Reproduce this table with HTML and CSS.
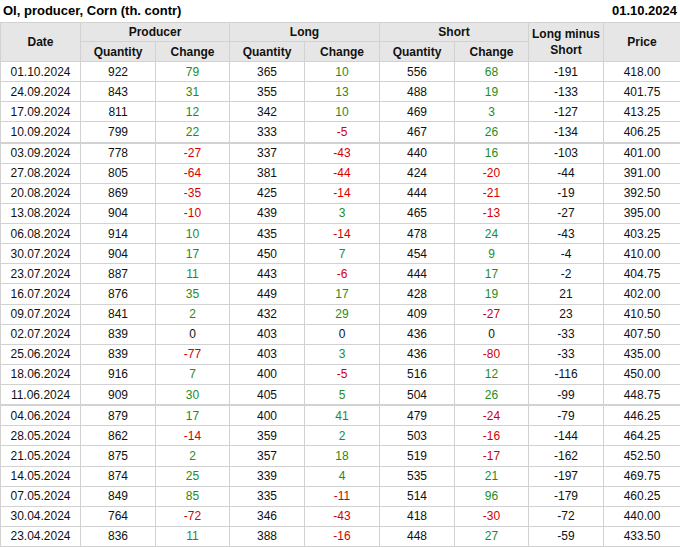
FILE: index.html
```html
<!DOCTYPE html>
<html>
<head>
<meta charset="utf-8">
<link rel="stylesheet" href="styles.css">
</head>
<body>
<div class="top">
  <span class="title">OI, producer, Corn (th. contr)</span>
  <span class="date">01.10.2024</span>
</div>
<table class="cot">
  <colgroup>
    <col class="c-date"><col class="c-n"><col class="c-n2"><col class="c-n"><col class="c-n"><col class="c-n"><col class="c-n2"><col class="c-n"><col class="c-last">
  </colgroup>
  <thead>
    <tr class="h1">
      <th rowspan="2">Date</th>
      <th colspan="2">Producer</th>
      <th colspan="2">Long</th>
      <th colspan="2">Short</th>
      <th rowspan="2" class="two">Long minus<br>Short</th>
      <th rowspan="2">Price</th>
    </tr>
    <tr class="h2">
      <th>Quantity</th><th>Change</th>
      <th>Quantity</th><th>Change</th>
      <th>Quantity</th><th>Change</th>
    </tr>
  </thead>
  <tbody>
    <tr><td>01.10.2024</td><td>922</td><td class="up">79</td><td>365</td><td class="up">10</td><td>556</td><td class="up">68</td><td>-191</td><td>418.00</td></tr>
    <tr><td>24.09.2024</td><td>843</td><td class="up">31</td><td>355</td><td class="up">13</td><td>488</td><td class="up">19</td><td>-133</td><td>401.75</td></tr>
    <tr><td>17.09.2024</td><td>811</td><td class="up">12</td><td>342</td><td class="up">10</td><td>469</td><td class="up">3</td><td>-127</td><td>413.25</td></tr>
    <tr><td>10.09.2024</td><td>799</td><td class="up">22</td><td>333</td><td class="down">-5</td><td>467</td><td class="up">26</td><td>-134</td><td>406.25</td></tr>
    <tr class="sep"><td>03.09.2024</td><td>778</td><td class="down">-27</td><td>337</td><td class="down">-43</td><td>440</td><td class="up">16</td><td>-103</td><td>401.00</td></tr>
    <tr><td>27.08.2024</td><td>805</td><td class="down">-64</td><td>381</td><td class="down">-44</td><td>424</td><td class="down">-20</td><td>-44</td><td>391.00</td></tr>
    <tr><td>20.08.2024</td><td>869</td><td class="down">-35</td><td>425</td><td class="down">-14</td><td>444</td><td class="down">-21</td><td>-19</td><td>392.50</td></tr>
    <tr><td>13.08.2024</td><td>904</td><td class="down">-10</td><td>439</td><td class="up">3</td><td>465</td><td class="down">-13</td><td>-27</td><td>395.00</td></tr>
    <tr><td>06.08.2024</td><td>914</td><td class="up">10</td><td>435</td><td class="down">-14</td><td>478</td><td class="up">24</td><td>-43</td><td>403.25</td></tr>
    <tr><td>30.07.2024</td><td>904</td><td class="up">17</td><td>450</td><td class="up">7</td><td>454</td><td class="up">9</td><td>-4</td><td>410.00</td></tr>
    <tr><td>23.07.2024</td><td>887</td><td class="up">11</td><td>443</td><td class="down">-6</td><td>444</td><td class="up">17</td><td>-2</td><td>404.75</td></tr>
    <tr><td>16.07.2024</td><td>876</td><td class="up">35</td><td>449</td><td class="up">17</td><td>428</td><td class="up">19</td><td>21</td><td>402.00</td></tr>
    <tr><td>09.07.2024</td><td>841</td><td class="up">2</td><td>432</td><td class="up">29</td><td>409</td><td class="down">-27</td><td>23</td><td>410.50</td></tr>
    <tr><td>02.07.2024</td><td>839</td><td>0</td><td>403</td><td>0</td><td>436</td><td>0</td><td>-33</td><td>407.50</td></tr>
    <tr><td>25.06.2024</td><td>839</td><td class="down">-77</td><td>403</td><td class="up">3</td><td>436</td><td class="down">-80</td><td>-33</td><td>435.00</td></tr>
    <tr><td>18.06.2024</td><td>916</td><td class="up">7</td><td>400</td><td class="down">-5</td><td>516</td><td class="up">12</td><td>-116</td><td>450.00</td></tr>
    <tr><td>11.06.2024</td><td>909</td><td class="up">30</td><td>405</td><td class="up">5</td><td>504</td><td class="up">26</td><td>-99</td><td>448.75</td></tr>
    <tr class="sep"><td>04.06.2024</td><td>879</td><td class="up">17</td><td>400</td><td class="up">41</td><td>479</td><td class="down">-24</td><td>-79</td><td>446.25</td></tr>
    <tr><td>28.05.2024</td><td>862</td><td class="down">-14</td><td>359</td><td class="up">2</td><td>503</td><td class="down">-16</td><td>-144</td><td>464.25</td></tr>
    <tr><td>21.05.2024</td><td>875</td><td class="up">2</td><td>357</td><td class="up">18</td><td>519</td><td class="down">-17</td><td>-162</td><td>452.50</td></tr>
    <tr><td>14.05.2024</td><td>874</td><td class="up">25</td><td>339</td><td class="up">4</td><td>535</td><td class="up">21</td><td>-197</td><td>469.75</td></tr>
    <tr><td>07.05.2024</td><td>849</td><td class="up">85</td><td>335</td><td class="down">-11</td><td>514</td><td class="up">96</td><td>-179</td><td>460.25</td></tr>
    <tr><td>30.04.2024</td><td>764</td><td class="down">-72</td><td>346</td><td class="down">-43</td><td>418</td><td class="down">-30</td><td>-72</td><td>440.00</td></tr>
    <tr><td>23.04.2024</td><td>836</td><td class="up">11</td><td>388</td><td class="down">-16</td><td>448</td><td class="up">27</td><td>-59</td><td>433.50</td></tr>
  </tbody>
</table>
</body>
</html>
```

FILE: styles.css
```css
html, body {
  margin: 0;
  padding: 0;
  background: #fff;
}
body {
  font-family: "Liberation Sans", Arial, sans-serif;
  font-size: 12px;
  color: #111;
  width: 680px;
}
.top {
  display: flex;
  justify-content: space-between;
  align-items: center;
  height: 21px;
  padding: 0 3px 1px 3px;
  font-weight: bold;
  font-size: 13px;
  color: #000;
}
.cot {
  width: 680px;
  border-collapse: collapse;
  table-layout: fixed;
}
.c-date { width: 80px; }
.c-n { width: 75px; }
.c-n2 { width: 74px; }
.c-last { width: 77px; }
.cot th, .cot td {
  border: 1px solid #d2d2d2;
  text-align: center;
  padding: 0;
  line-height: 14px;
}
.cot td {
  height: 19.125px;
  color: #111;
}
.cot th {
  background: #e6e6e6;
  font-weight: bold;
  color: #111;
}
.cot .h1 th {
  height: 18px;
}
.cot .h2 th {
  height: 19px;
}
.cot th.two {
  line-height: 16px;
}
.cot td.up { color: #1e8c1e; }
.cot td.down { color: #d40000; }
.cot tr.sep td {
  border-top: 2px solid #d2d2d2;
}
```
